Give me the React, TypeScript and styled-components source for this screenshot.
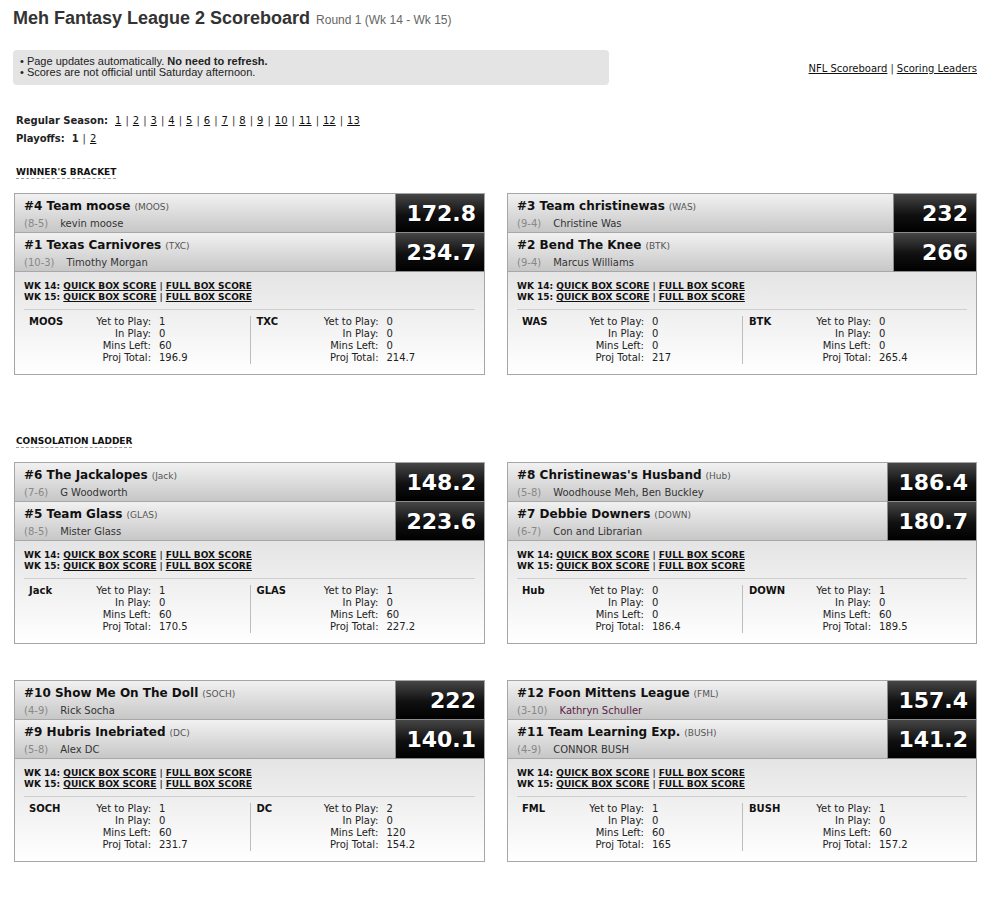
import React from 'react'
import styled, { createGlobalStyle } from 'styled-components'

const GlobalStyle = createGlobalStyle`
  body {
    margin: 0;
    background: #fff;
    color: #222;
    font-family: 'DejaVu Sans', Verdana, sans-serif;
    font-size: 10px;
  }
`

const Page = styled.div`
  padding: 7px 11px 24px 14px;
`
const Header = styled.div`
  display: flex;
  align-items: baseline;
  margin-left: -1px;
  font-family: 'Liberation Sans', Arial, sans-serif;
`
const Title = styled.h1`
  margin: 0;
  font-size: 18px;
  line-height: 22px;
  font-weight: bold;
  color: #333;
`
const Round = styled.span`
  margin-left: 6px;
  font-size: 12px;
  color: #666;
`
const InfoRow = styled.div`
  display: flex;
  align-items: center;
  justify-content: space-between;
  margin-top: 21px;
`
const Notice = styled.div`
  width: 596px;
  margin-left: -1px;
  padding: 6px 7px 7px;
  box-sizing: border-box;
  background: #e4e4e4;
  border-radius: 4px;
  font-family: 'Liberation Sans', Arial, sans-serif;
  font-size: 11px;
  line-height: 11px;
  color: #222;
`
const TopLinks = styled.div`
  display: flex;
  padding-top: 2px;
`
const Link = styled.a`
  color: #111;
  text-decoration: underline;
  cursor: pointer;
`
const Sep = styled.span<{ $gap?: number }>`
  margin: 0 ${(p) => p.$gap ?? 4}px;
  color: #333;
`
const Nav = styled.div`
  margin-top: 27px;
  padding-left: 2px;
`
const NavRow = styled.div`
  display: flex;
  align-items: baseline;
  line-height: 18px;
`
const NavLabel = styled.b`
  margin-right: 7px;
`
const SectionHead = styled.div<{ $top: number }>`
  display: flex;
  margin: ${(p) => p.$top}px 0 0 2px;
`
const SectionTitle = styled.span`
  font-size: 9px;
  font-weight: bold;
  line-height: 11px;
  color: #111;
  border-bottom: 1px dashed #9a9a9a;
`
const Grid = styled.div`
  display: grid;
  grid-template-columns: 471px 470px;
  column-gap: 22px;
  row-gap: 36px;
  margin-top: 14px;
`
const Card = styled.div`
  border: 1px solid #a6a6a6;
  background: #fff;
`
const Teams = styled.div`
  display: grid;
  grid-template-columns: 1fr auto;
`
const TeamInfo = styled.div`
  height: 39px;
  box-sizing: border-box;
  padding: 4px 9px 0;
  background: linear-gradient(#f1f1f1, #c7c7c7);
  border-bottom: 1px solid #a8a8a8;
  white-space: nowrap;
  overflow: hidden;
`
const NameLine = styled.div`
  line-height: 16px;
  margin-bottom: 2px;
`
const TeamName = styled.span`
  font-size: 12px;
  font-weight: bold;
  color: #111;
`
const TeamAbbr = styled.span`
  margin-left: 4px;
  font-size: 9px;
  color: #555;
`
const OwnerLine = styled.div`
  line-height: 14px;
`
const Record = styled.span`
  margin-right: 12px;
  color: #888;
`
const Owner = styled.span<{ $visited?: boolean }>`
  color: ${(p) => (p.$visited ? '#5a2448' : '#333')};
`
const Score = styled.div`
  display: flex;
  align-items: center;
  justify-content: flex-end;
  min-width: 83px;
  box-sizing: border-box;
  padding: 0 8px 0 10px;
  background: linear-gradient(#464646, #101010 55%, #000);
  border-left: 1px solid #8c8c8c;
  border-bottom: 1px solid #8c8c8c;
  color: #fff;
  font-size: 22px;
  font-weight: bold;
  text-shadow: 1px 1px 0 rgba(0, 0, 0, 0.6);
`
const Details = styled.div`
  padding: 9px 9px 10px;
  background: linear-gradient(#e4e4e4, #fff);
`
const BoxLinks = styled.div`
  font-size: 9px;
  font-weight: bold;
  line-height: 11px;
  color: #111;
`
const Rule = styled.div`
  margin: 6px 0;
  border-top: 1px solid #cfcfcf;
`
const Stats = styled.div`
  display: grid;
  grid-template-columns: 1fr 1fr;
`
const Half = styled.div`
  display: flex;
  padding-left: 5px;
  line-height: 12px;
  & + & {
    border-left: 1px solid #bdbdbd;
    padding-left: 6px;
  }
`
const Abbr = styled.div`
  width: 64px;
  font-weight: bold;
  color: #111;
`
const StatGrid = styled.div`
  display: grid;
  grid-template-columns: 58px auto;
  column-gap: 8px;
`
const StatLabel = styled.div`
  text-align: right;
  white-space: nowrap;
`

interface Team {
  seed: number
  name: string
  abbr: string
  rec: string
  owner: string
  score: string
  ytp: number
  inPlay: number
  mins: number
  proj: string
  visited?: boolean
}

interface Matchup {
  a: Team
  b: Team
}

const t = (
  seed: number,
  name: string,
  abbr: string,
  rec: string,
  owner: string,
  score: string,
  ytp: number,
  inPlay: number,
  mins: number,
  proj: string,
  visited?: boolean
): Team => ({ seed, name, abbr, rec, owner, score, ytp, inPlay, mins, proj, visited })

const winners: Matchup[] = [
  {
    a: t(4, 'Team moose', 'MOOS', '8-5', 'kevin moose', '172.8', 1, 0, 60, '196.9'),
    b: t(1, 'Texas Carnivores', 'TXC', '10-3', 'Timothy Morgan', '234.7', 0, 0, 0, '214.7'),
  },
  {
    a: t(3, 'Team christinewas', 'WAS', '9-4', 'Christine Was', '232', 0, 0, 0, '217'),
    b: t(2, 'Bend The Knee', 'BTK', '9-4', 'Marcus Williams', '266', 0, 0, 0, '265.4'),
  },
]

const consolation: Matchup[] = [
  {
    a: t(6, 'The Jackalopes', 'Jack', '7-6', 'G Woodworth', '148.2', 1, 0, 60, '170.5'),
    b: t(5, 'Team Glass', 'GLAS', '8-5', 'Mister Glass', '223.6', 1, 0, 60, '227.2'),
  },
  {
    a: t(8, "Christinewas's Husband", 'Hub', '5-8', 'Woodhouse Meh, Ben Buckley', '186.4', 0, 0, 0, '186.4'),
    b: t(7, 'Debbie Downers', 'DOWN', '6-7', 'Con and Librarian', '180.7', 1, 0, 60, '189.5'),
  },
  {
    a: t(10, 'Show Me On The Doll', 'SOCH', '4-9', 'Rick Socha', '222', 1, 0, 60, '231.7'),
    b: t(9, 'Hubris Inebriated', 'DC', '5-8', 'Alex DC', '140.1', 2, 0, 120, '154.2'),
  },
  {
    a: t(12, 'Foon Mittens League', 'FML', '3-10', 'Kathryn Schuller', '157.4', 1, 0, 60, '165', true),
    b: t(11, 'Team Learning Exp.', 'BUSH', '4-9', 'CONNOR BUSH', '141.2', 1, 0, 60, '157.2'),
  },
]

const TeamRow = ({ team }: { team: Team }) => (
  <>
    <TeamInfo>
      <NameLine>
        <TeamName>
          #{team.seed} {team.name}
        </TeamName>
        <TeamAbbr>({team.abbr})</TeamAbbr>
      </NameLine>
      <OwnerLine>
        <Record>({team.rec})</Record>
        <Owner $visited={team.visited}>{team.owner}</Owner>
      </OwnerLine>
    </TeamInfo>
    <Score>{team.score}</Score>
  </>
)

const TeamStats = ({ team }: { team: Team }) => (
  <Half>
    <Abbr>{team.abbr}</Abbr>
    <StatGrid>
      <StatLabel>Yet to Play:</StatLabel>
      <div>{team.ytp}</div>
      <StatLabel>In Play:</StatLabel>
      <div>{team.inPlay}</div>
      <StatLabel>Mins Left:</StatLabel>
      <div>{team.mins}</div>
      <StatLabel>Proj Total:</StatLabel>
      <div>{team.proj}</div>
    </StatGrid>
  </Half>
)

const MatchupCard = ({ m }: { m: Matchup }) => (
  <Card>
    <Teams>
      <TeamRow team={m.a} />
      <TeamRow team={m.b} />
    </Teams>
    <Details>
      <BoxLinks>
        {[14, 15].map((wk) => (
          <div key={wk}>
            WK {wk}: <Link>QUICK BOX SCORE</Link>
            <Sep $gap={3}>|</Sep>
            <Link>FULL BOX SCORE</Link>
          </div>
        ))}
      </BoxLinks>
      <Rule />
      <Stats>
        <TeamStats team={m.a} />
        <TeamStats team={m.b} />
      </Stats>
    </Details>
  </Card>
)

const weeks = Array.from({ length: 13 }, (_, i) => i + 1)

const App = () => (
  <Page>
    <GlobalStyle />
    <Header>
      <Title>Meh Fantasy League 2 Scoreboard</Title>
      <Round>Round 1 (Wk 14 - Wk 15)</Round>
    </Header>
    <InfoRow>
      <Notice>
        <div>
          • Page updates automatically. <b>No need to refresh.</b>
        </div>
        <div>• Scores are not official until Saturday afternoon.</div>
      </Notice>
      <TopLinks>
        <Link>NFL Scoreboard</Link>
        <Sep $gap={3}>|</Sep>
        <Link>Scoring Leaders</Link>
      </TopLinks>
    </InfoRow>
    <Nav>
      <NavRow>
        <NavLabel>Regular Season:</NavLabel>
        {weeks.map((w, i) => (
          <React.Fragment key={w}>
            {i > 0 && <Sep>|</Sep>}
            <Link>{w}</Link>
          </React.Fragment>
        ))}
      </NavRow>
      <NavRow>
        <NavLabel>Playoffs:</NavLabel>
        <b>1</b>
        <Sep>|</Sep>
        <Link>2</Link>
      </NavRow>
    </Nav>
    <SectionHead $top={19}>
      <SectionTitle>WINNER'S BRACKET</SectionTitle>
    </SectionHead>
    <Grid>
      {winners.map((m) => (
        <MatchupCard key={m.a.abbr} m={m} />
      ))}
    </Grid>
    <SectionHead $top={61}>
      <SectionTitle>CONSOLATION LADDER</SectionTitle>
    </SectionHead>
    <Grid>
      {consolation.map((m) => (
        <MatchupCard key={m.a.abbr} m={m} />
      ))}
    </Grid>
  </Page>
)

export default App
